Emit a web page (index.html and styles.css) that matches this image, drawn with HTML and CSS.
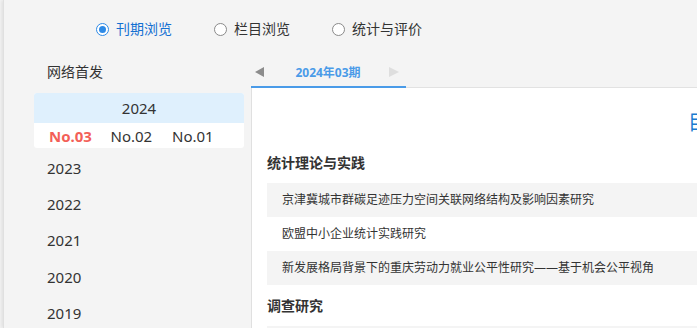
FILE: index.html
```html
<!DOCTYPE html>
<html lang="zh-CN">
<head>
<meta charset="utf-8">
<title>刊期浏览</title>
<link rel="stylesheet" href="styles.css">
</head>
<body>
<div class="page">
  <div class="radios">
    <label class="radio checked"><span class="dot"></span><span class="rtext">刊期浏览</span></label>
    <label class="radio"><span class="dot"></span><span class="rtext">栏目浏览</span></label>
    <label class="radio"><span class="dot"></span><span class="rtext">统计与评价</span></label>
  </div>
  <div class="layout">
    <aside class="sidebar">
      <div class="side-head">网络首发</div>
      <div class="year-box">
        <div class="year-head">2024</div>
        <div class="issues">
          <span class="issue active">No.03</span>
          <span class="issue">No.02</span>
          <span class="issue">No.01</span>
        </div>
      </div>
      <ul class="years">
        <li>2023</li>
        <li>2022</li>
        <li>2021</li>
        <li>2020</li>
        <li>2019</li>
      </ul>
    </aside>
    <main class="main">
      <div class="tabbar">
        <div class="tab">
          <span class="arrow left"></span>
          <span class="tab-text">2024年03期</span>
          <span class="arrow right"></span>
        </div>
      </div>
      <div class="content">
        <div class="title">目录</div>
        <section class="section">
          <h3 class="sec-title">统计理论与实践</h3>
          <div class="row gray">京津冀城市群碳足迹压力空间关联网络结构及影响因素研究</div>
          <div class="row">欧盟中小企业统计实践研究</div>
          <div class="row gray">新发展格局背景下的重庆劳动力就业公平性研究——基于机会公平视角</div>
        </section>
        <section class="section">
          <h3 class="sec-title">调查研究</h3>
          <div class="row gray">&nbsp;</div>
        </section>
      </div>
    </main>
  </div>
</div>
</body>
</html>
```
FILE: styles.css
```css
html, body {
  margin: 0;
  padding: 0;
}
body {
  background: #f4f4f4;
  font-family: "Noto Sans", "Noto Sans CJK SC", sans-serif;
  color: #333;
  overflow: hidden;
  width: 697px;
  height: 328px;
}
.page {
  margin-left: 3px;
  border-left: 1px solid #e0e0e0;
  box-shadow: -2px 0 3px rgba(0, 0, 0, 0.07);
  height: 328px;
  width: 1200px;
}
.radios {
  height: 58px;
  display: flex;
  align-items: center;
  padding-left: 92px;
}
.radio {
  display: flex;
  align-items: center;
  margin-right: 42px;
  font-size: 14px;
  color: #333;
}
.dot {
  box-sizing: border-box;
  width: 13px;
  height: 13px;
  border-radius: 50%;
  border: 1px solid #8a8a8a;
  background: #fff;
  margin-right: 7px;
  display: flex;
  align-items: center;
  justify-content: center;
}
.radio.checked { color: #1470d2; }
.radio.checked .dot {
  border-color: #2e8ae6;
}
.radio.checked .dot::after {
  content: "";
  width: 7px;
  height: 7px;
  border-radius: 50%;
  background: #2e8ae6;
}
.rtext { line-height: 20px; }

.layout {
  display: flex;
}
.sidebar {
  width: 247px;
  flex: none;
}
.side-head {
  height: 28px;
  line-height: 28px;
  padding-left: 43px;
  font-size: 14px;
  color: #333;
}
.year-box {
  margin: 7px 0 0 30px;
  width: 210px;
  border-radius: 3px;
  background: #fff;
  overflow: hidden;
}
.year-head {
  height: 30px;
  line-height: 30px;
  text-align: center;
  background: #dff0fd;
  font-size: 15px;
  color: #333;
}
.issues {
  height: 25px;
  display: flex;
  align-items: center;
  padding-left: 15px;
  font-size: 15px;
}
.issue {
  width: 61.5px;
  flex: none;
  color: #333;
}
.issue.active {
  color: #f35f58;
  font-weight: 700;
}
.years {
  list-style: none;
  margin: 2px 0 0;
  padding: 0 0 0 43px;
}
.years li {
  height: 36.2px;
  line-height: 36px;
  font-size: 15px;
  color: #333;
}

.main {
  flex: none;
  width: 913px;
}
.tabbar {
  height: 29px;
  border-bottom: 1px solid #e2e2e2;
  display: flex;
}
.tab {
  box-sizing: border-box;
  width: 155px;
  height: 30px;
  border-bottom: 2px solid #4a9be8;
  margin-bottom: -1px;
  display: flex;
  align-items: center;
  padding: 0 7px 0 4px;
}
.arrow {
  width: 0;
  height: 0;
  border-top: 5px solid transparent;
  border-bottom: 5px solid transparent;
  flex: none;
}
.arrow.left {
  border-right: 9px solid #8c8c8c;
}
.arrow.right {
  border-left: 10px solid #dedede;
}
.tab-text {
  flex: 1;
  text-align: center;
  font-size: 12px;
  font-weight: 700;
  color: #4a9be8;
  padding-left: 3px;
}
.content {
  background: #fff;
  border-left: 1px solid #e0e0e0;
  height: 240px;
  padding: 20px 0 0 15px;
}
.title {
  height: 30px;
  line-height: 30px;
  text-align: center;
  font-size: 20px;
  color: #1a7bd0;
  padding-right: 15px;
}
.section {
  margin-top: 13px;
}
.section + .section {
  margin-top: 9px;
}
.sec-title {
  margin: 0 0 8px;
  height: 24px;
  line-height: 24px;
  font-size: 14px;
  font-weight: 700;
  color: #333;
}
.row {
  height: 34px;
  line-height: 34px;
  padding-left: 15px;
  font-size: 12px;
  color: #333;
}
.row.gray {
  background: #f4f4f4;
}
```
